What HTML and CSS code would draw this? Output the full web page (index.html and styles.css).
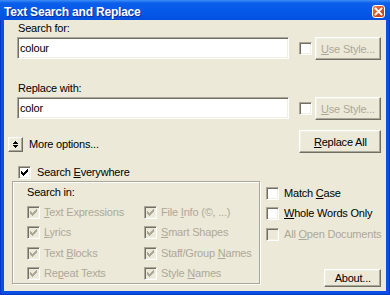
FILE: index.html
```html
<!DOCTYPE html>
<html lang="en">
  <head>
    <meta charset="UTF-8" />
    <meta name="viewport" content="width=device-width, initial-scale=1.0" />
    <title>Text Search and Replace</title>
    <link rel="stylesheet" href="styles.css">
  </head>
  <body>
    <div class="window">
      <div class="title-bar">
        <span class="title-text">Text Search and Replace</span>
        <button class="close-button" aria-label="Close">
          <svg width="11" height="11" viewBox="0 0 11 11">
            <path d="M2.5 2.5l6 6M8.5 2.5l-6 6" stroke="#fff" stroke-width="1.8" stroke-linecap="square" />
          </svg>
        </button>
      </div>
      <div class="frame">
        <div class="client">
          <div class="field-label">Search for:</div>
          <div class="field-row">
            <input class="text-field" type="text" value="colour" />
            <span class="check"></span>
            <button class="push-button style-button" disabled><u>U</u>se Style...</button>
          </div>

          <div class="field-label second">Replace with:</div>
          <div class="field-row">
            <input class="text-field" type="text" value="color" />
            <span class="check"></span>
            <button class="push-button style-button" disabled><u>U</u>se Style...</button>
          </div>

          <div class="middle-row">
            <div class="more-options">
              <button class="push-button small-button" aria-label="More options">
                <svg width="5" height="7" viewBox="0 0 5 7" shape-rendering="crispEdges">
                  <path d="M2 0h1v1h1v1h1v1H0V2h1V1h1z M0 4h5v1H4v1H3v1H2V6H1V5H0z" fill="#000" />
                </svg>
              </button>
              <span>More options...</span>
            </div>
            <button class="push-button replace-button"><u>R</u>eplace All</button>
          </div>

          <div class="option everywhere">
            <span class="check">
              <svg width="7" height="7" viewBox="0 0 7 7" shape-rendering="crispEdges">
                <path d="M0 2h1v3H0z M1 3h1v3H1z M2 4h1v3H2z M3 3h1v3H3z M4 2h1v3H4z M5 1h1v3H5z M6 0h1v3H6z" fill="#000" />
              </svg>
            </span>
            <span>Search <u>E</u>verywhere</span>
          </div>

          <div class="bottom-section">
            <div class="group-box">
              <div class="group-label">Search in:</div>
              <div class="options-grid">
                <div class="option disabled">
                  <span class="check disabled"><svg width="7" height="7" viewBox="0 0 7 7" shape-rendering="crispEdges"><path d="M0 2h1v3H0z M1 3h1v3H1z M2 4h1v3H2z M3 3h1v3H3z M4 2h1v3H4z M5 1h1v3H5z M6 0h1v3H6z" /></svg></span>
                  <span><u>T</u>ext Expressions</span>
                </div>
                <div class="option disabled">
                  <span class="check disabled"><svg width="7" height="7" viewBox="0 0 7 7" shape-rendering="crispEdges"><path d="M0 2h1v3H0z M1 3h1v3H1z M2 4h1v3H2z M3 3h1v3H3z M4 2h1v3H4z M5 1h1v3H5z M6 0h1v3H6z" /></svg></span>
                  <span>File <u>I</u>nfo (©, ...)</span>
                </div>
                <div class="option disabled">
                  <span class="check disabled"><svg width="7" height="7" viewBox="0 0 7 7" shape-rendering="crispEdges"><path d="M0 2h1v3H0z M1 3h1v3H1z M2 4h1v3H2z M3 3h1v3H3z M4 2h1v3H4z M5 1h1v3H5z M6 0h1v3H6z" /></svg></span>
                  <span><u>L</u>yrics</span>
                </div>
                <div class="option disabled">
                  <span class="check disabled"><svg width="7" height="7" viewBox="0 0 7 7" shape-rendering="crispEdges"><path d="M0 2h1v3H0z M1 3h1v3H1z M2 4h1v3H2z M3 3h1v3H3z M4 2h1v3H4z M5 1h1v3H5z M6 0h1v3H6z" /></svg></span>
                  <span><u>S</u>mart Shapes</span>
                </div>
                <div class="option disabled">
                  <span class="check disabled"><svg width="7" height="7" viewBox="0 0 7 7" shape-rendering="crispEdges"><path d="M0 2h1v3H0z M1 3h1v3H1z M2 4h1v3H2z M3 3h1v3H3z M4 2h1v3H4z M5 1h1v3H5z M6 0h1v3H6z" /></svg></span>
                  <span>Text <u>B</u>locks</span>
                </div>
                <div class="option disabled">
                  <span class="check disabled"><svg width="7" height="7" viewBox="0 0 7 7" shape-rendering="crispEdges"><path d="M0 2h1v3H0z M1 3h1v3H1z M2 4h1v3H2z M3 3h1v3H3z M4 2h1v3H4z M5 1h1v3H5z M6 0h1v3H6z" /></svg></span>
                  <span>Staff/Group <u>N</u>ames</span>
                </div>
                <div class="option disabled">
                  <span class="check disabled"><svg width="7" height="7" viewBox="0 0 7 7" shape-rendering="crispEdges"><path d="M0 2h1v3H0z M1 3h1v3H1z M2 4h1v3H2z M3 3h1v3H3z M4 2h1v3H4z M5 1h1v3H5z M6 0h1v3H6z" /></svg></span>
                  <span>Re<u>p</u>eat Texts</span>
                </div>
                <div class="option disabled">
                  <span class="check disabled"><svg width="7" height="7" viewBox="0 0 7 7" shape-rendering="crispEdges"><path d="M0 2h1v3H0z M1 3h1v3H1z M2 4h1v3H2z M3 3h1v3H3z M4 2h1v3H4z M5 1h1v3H5z M6 0h1v3H6z" /></svg></span>
                  <span>Style <u>N</u>ames</span>
                </div>
              </div>
            </div>

            <div class="right-column">
              <div class="right-checks">
                <div class="option wide-gap">
                  <span class="check"></span>
                  <span>Match <u>C</u>ase</span>
                </div>
                <div class="option wide-gap">
                  <span class="check"></span>
                  <span><u>W</u>hole Words Only</span>
                </div>
                <div class="option wide-gap disabled">
                  <span class="check disabled"></span>
                  <span>All <u>O</u>pen Documents</span>
                </div>
              </div>
              <button class="push-button about-button">About...</button>
            </div>
          </div>
        </div>
      </div>
    </div>
  </body>
</html>
```

FILE: styles.css
```css
body {
  margin: 0;
  font-family: "Liberation Sans", Arial, sans-serif;
  font-size: 11px;
  letter-spacing: -0.2px;
  white-space: nowrap;
  background-color: #fff;
}
.window {
  width: 390px;
  height: 295px;
  display: flex;
  flex-direction: column;
  background-color: #0a4fe2;
}
.title-bar {
  height: 20px;
  box-sizing: border-box;
  display: flex;
  justify-content: space-between;
  align-items: flex-start;
  padding: 0 5px 0 4px;
  background: linear-gradient(#3d8ef8 0, #0c5fea 3px, #0458e8 60%, #0350e0 100%);
}
.title-text {
  color: white;
  font-weight: bold;
  font-size: 12px;
  line-height: 16px;
  padding-top: 4px;
  text-shadow: 1px 1px #0c2a9c;
}
.close-button {
  margin-top: 5px;
  width: 13px;
  height: 13px;
  padding: 0;
  border: 1px solid white;
  border-radius: 3px;
  background: linear-gradient(135deg, #ec8a63 0, #d9552a 45%, #c23b14 100%);
  display: flex;
  align-items: center;
  justify-content: center;
}
.frame {
  flex: 1;
  display: flex;
  padding: 0 4px 4px;
  box-shadow: inset 1px 0 #0838c8, inset -1px 0 #0838c8, inset 0 -1px #0838c8;
}
.client {
  flex: 1;
  display: flex;
  flex-direction: column;
  padding: 0 5px 0 4px;
  background-color: #ece9d8;
  color: #000;
}
.field-label {
  margin: 2px 0 0 10px;
  line-height: 13px;
}
.field-label.second {
  margin-top: 22px;
}
.field-row {
  display: flex;
  align-items: flex-start;
  margin: 2px 0 0 9px;
}
.text-field {
  width: 272px;
  height: 22px;
  box-sizing: border-box;
  margin: 0;
  padding: 0 2px;
  font: inherit;
  letter-spacing: inherit;
  color: #000;
  background-color: white;
  border: 1px solid;
  border-color: #aca899 #fff #fff #aca899;
  box-shadow: inset 1px 1px #716f64, inset -1px -1px #f1efe2;
  outline: none;
}
.check {
  width: 13px;
  height: 13px;
  box-sizing: border-box;
  flex-shrink: 0;
  display: flex;
  padding: 2px;
  background-color: white;
  border: 1px solid;
  border-color: #aca899 #fff #fff #aca899;
  box-shadow: inset 1px 1px #716f64, inset -1px -1px #f1efe2;
}
.check.disabled {
  background-color: #ece9d8;
  fill: #aca899;
}
.field-row .check {
  margin: 5px 0 0 10px;
}
.push-button {
  box-sizing: border-box;
  margin: 0;
  padding: 0;
  font: inherit;
  letter-spacing: inherit;
  color: #000;
  background-color: #ece9d8;
  border: 1px solid;
  border-color: #fff #716f64 #716f64 #fff;
  box-shadow: inset -1px -1px #aca899, inset 1px 1px #f1efe2;
  display: flex;
  align-items: center;
  justify-content: center;
}
.push-button:disabled {
  color: #aca899;
}
.style-button {
  margin-left: 3px;
  width: 66px;
  height: 23px;
}
.middle-row {
  display: flex;
  justify-content: space-between;
  align-items: flex-start;
  margin-top: 10px;
}
.more-options {
  display: flex;
  align-items: center;
  gap: 6px;
  margin-top: 7px;
  line-height: 13px;
}
.small-button {
  width: 15px;
  height: 15px;
}
.replace-button {
  width: 82px;
  height: 23px;
}
.option {
  display: flex;
  align-items: center;
  gap: 4px;
  line-height: 13px;
}
.option.wide-gap {
  gap: 5px;
}
.option.disabled {
  color: #aca899;
}
.everywhere {
  margin: 13px 0 0 10px;
  gap: 6px;
}
.bottom-section {
  display: flex;
  align-items: flex-start;
  margin-top: 2px;
}
.group-box {
  width: 248px;
  height: 103px;
  box-sizing: border-box;
  margin-left: 4px;
  padding: 4px 0 0 14px;
  border: 1px solid #aca899;
  box-shadow: 1px 1px 0 #fff, inset 1px 1px 0 #fff;
}
.group-label {
  line-height: 13px;
}
.options-grid {
  display: grid;
  grid-template-columns: 117px auto;
  grid-template-rows: 20px 21px 20px 13px;
  align-items: start;
  margin-top: 7px;
}
.right-column {
  flex: 1;
  min-width: 0;
  height: 106px;
  box-sizing: border-box;
  margin-left: 6px;
  padding-top: 6px;
  display: flex;
  flex-direction: column;
}
.right-checks {
  display: grid;
  grid-template-rows: 20px 21px 13px;
  align-items: start;
}
.about-button {
  margin-top: auto;
  align-self: flex-end;
  width: 57px;
  height: 18px;
}
```
